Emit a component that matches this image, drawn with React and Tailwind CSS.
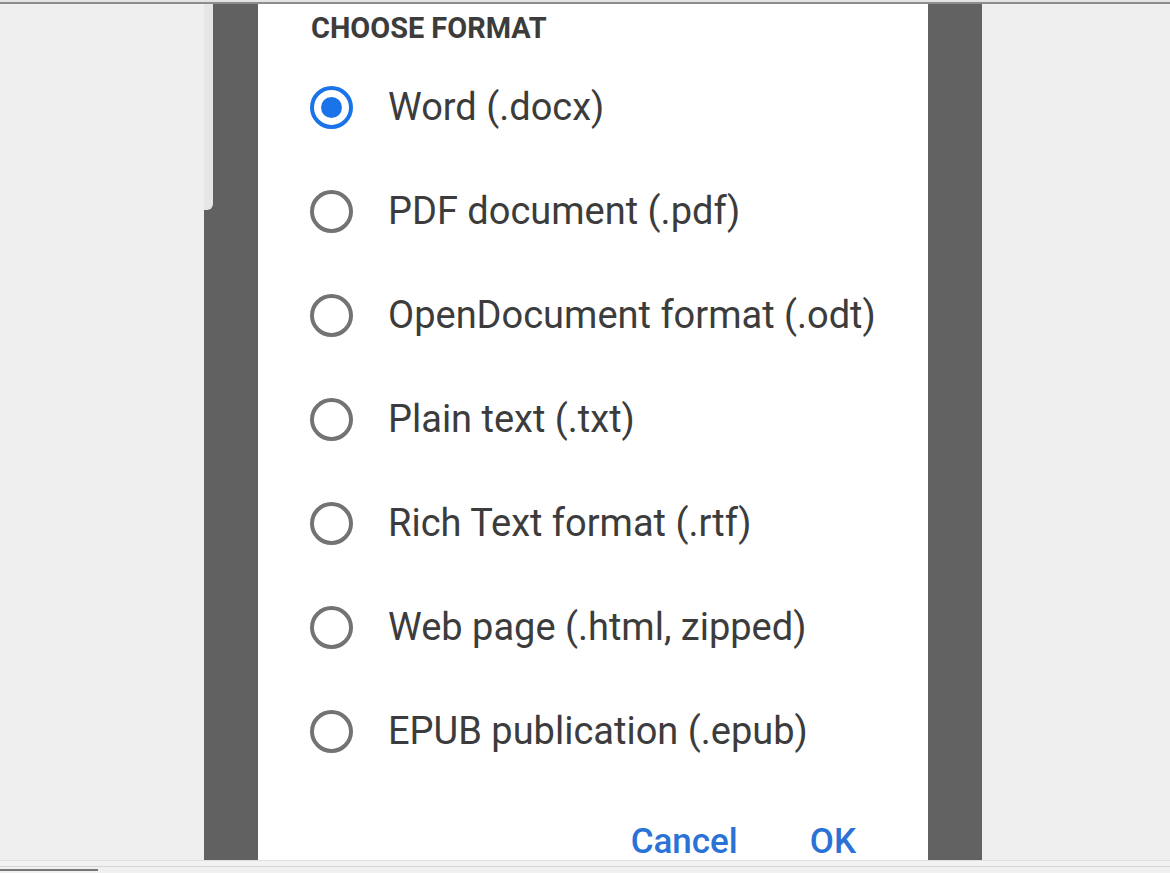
const OPTIONS = [
  "Word (.docx)",
  "PDF document (.pdf)",
  "OpenDocument format (.odt)",
  "Plain text (.txt)",
  "Rich Text format (.rtf)",
  "Web page (.html, zipped)",
  "EPUB publication (.epub)",
];

function Radio({ checked }) {
  return (
    <span
      className={`flex h-[43px] w-[43px] shrink-0 items-center justify-center rounded-full border-[4px] ${
        checked ? "border-[#1a73e8]" : "border-[#737373]"
      }`}
    >
      {checked && <span className="h-[21px] w-[21px] rounded-full bg-[#1a73e8]" />}
    </span>
  );
}

export default function App() {
  const selected = 0;

  return (
    <div
      className="flex h-[873px] w-[1170px] flex-col overflow-hidden bg-[#efefef]"
      style={{ fontFamily: "Roboto, 'Liberation Sans', sans-serif" }}
    >
      {/* top edge */}
      <div className="h-[2px] bg-[#e4e4e4]" />
      <div className="h-[2px] bg-[#8c8c8c]" />

      <div className="flex h-[856px]">
        <div className="w-[204px] bg-[#efefef]" />

        {/* left shade + scroll thumb */}
        <div className="flex w-[54px] bg-[#616161]">
          <div className="h-[206px] w-[9px] rounded-br-[6px] bg-[#e6e6e6]" />
          <div className="flex-1" />
        </div>

        {/* dialog */}
        <div className="flex w-[670px] flex-col overflow-hidden bg-white">
          <h2 className="pl-[53px] pt-[10px] text-[28.9px] font-bold leading-[28px] text-[#3c3c3c]">
            CHOOSE FORMAT
          </h2>

          <div className="mt-[13px] flex flex-col">
            {OPTIONS.map((label, i) => (
              <div key={label} className="flex h-[104px] items-center pl-[52px]">
                <Radio checked={i === selected} />
                <span className="ml-[35px] text-[38px] leading-none text-[#3c3c3c]">
                  {label}
                </span>
              </div>
            ))}
          </div>

          <div className="mt-[39px] flex h-[40px] items-center justify-end gap-[72px] pr-[72px]">
            <button className="text-[35px] font-medium leading-none text-[#2a72d6]">
              Cancel
            </button>
            <button className="text-[35px] font-medium leading-none text-[#2a72d6]">
              OK
            </button>
          </div>
        </div>

        <div className="w-[54px] bg-[#626262]" />
        <div className="flex-1 bg-[#efefef]" />
      </div>

      {/* bottom edge */}
      <div className="h-[6px] border-t border-[#e0e0e0] bg-[#f2f2f2]" />
      <div className="h-px bg-[#d6d6d6]" />
      <div className="relative flex-1 bg-[#f0f0f0]">
        <div className="mt-[2px] h-[2px] w-[98px] bg-[#777777]" />
      </div>
    </div>
  );
}
